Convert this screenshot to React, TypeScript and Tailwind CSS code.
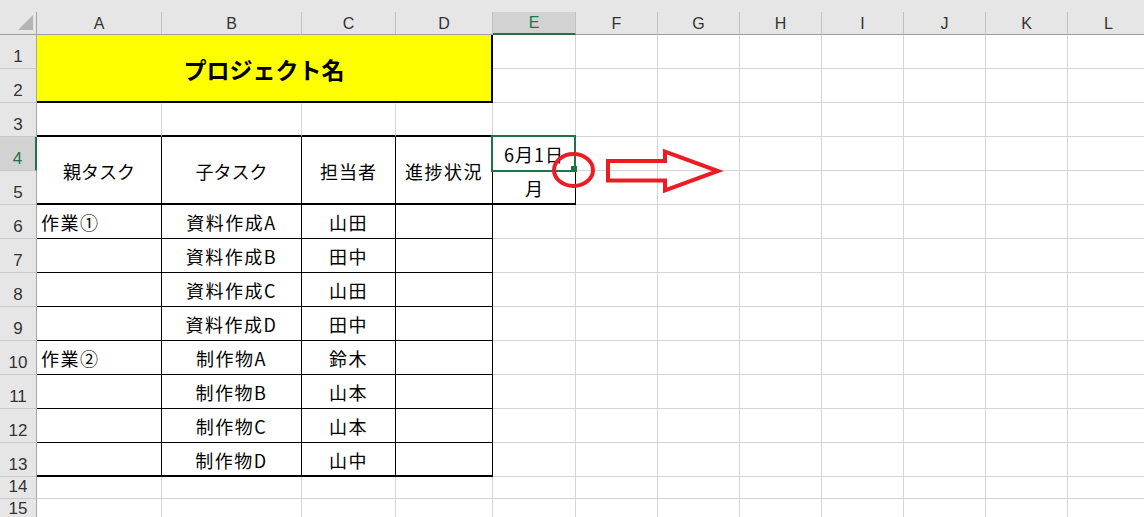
import React from "react";

const FONT = "font-['Noto_Sans_CJK_JP','Noto_Sans_CJK_SC',sans-serif]";
const HEAD_FONT = "font-['Liberation_Sans','Noto_Sans_CJK_JP',sans-serif]";

const COLS = ["A", "B", "C", "D", "E", "F", "G", "H", "I", "J", "K", "L"];

function Blanks({ n }: { n: number }) {
  return (
    <>
      {Array.from({ length: n }).map((_, i) => (
        <div key={i} className="border-r border-b border-[#d4d4d4]" />
      ))}
    </>
  );
}

function RowLabel({ n, active }: { n: number; active?: boolean }) {
  if (active) {
    return (
      <div
        className={`col-start-1 flex items-end justify-center pb-[3px] leading-none text-[17px] bg-[#d2d2d2] text-[#217346] border-r-2 border-r-[#217346] border-b border-b-[#c8c8c8] ${HEAD_FONT}`}
      >
        {n}
      </div>
    );
  }
  return (
    <div
      className={`col-start-1 flex items-end justify-center pb-[3px] leading-none text-[17px] bg-[#e6e6e6] text-[#333] border-r border-r-[#a6a6a6] border-b border-b-[#c8c8c8] ${HEAD_FONT}`}
    >
      {n}
    </div>
  );
}

function ColHead({ l }: { l: string }) {
  if (l === "E") {
    return (
      <div className="flex items-center justify-center pt-[1px] text-[16px] bg-[#d2d2d2] text-[#217346] border-r border-r-[#c0c0c0] border-b-2 border-b-[#217346]">
        {l}
      </div>
    );
  }
  return (
    <div className="flex items-center justify-center pt-[1px] text-[16px] bg-[#e6e6e6] text-[#333] border-r border-r-[#c0c0c0] border-b border-b-[#a0a0a0]">
      {l}
    </div>
  );
}

const tasks = [
  { a: "作業①", b: "資料作成A", c: "山田" },
  { a: "", b: "資料作成B", c: "田中" },
  { a: "", b: "資料作成C", c: "山田" },
  { a: "", b: "資料作成D", c: "田中" },
  { a: "作業②", b: "制作物A", c: "鈴木" },
  { a: "", b: "制作物B", c: "山本" },
  { a: "", b: "制作物C", c: "山本" },
  { a: "", b: "制作物D", c: "山中" },
];

export default function App() {
  return (
    <div className={`relative w-[1144px] h-[517px] overflow-hidden bg-white text-black ${FONT}`}>
      <div className="h-[12px] bg-[#e6e6e6]" />
      <div className="grid grid-cols-[37px_125px_140px_94px_97px_83px_repeat(7,82px)] grid-rows-[23px_repeat(13,34px)_22px_22px]">
        {/* header row */}
        <div className="relative bg-[#e6e6e6] border-r border-r-[#a6a6a6] border-b border-b-[#a0a0a0]">
          <svg className="absolute left-[18px] top-[3px]" width="15" height="15" viewBox="0 0 15 15">
            <polygon points="15,0 15,15 0,15" fill="#b4b4b4" />
          </svg>
        </div>
        <div className={`contents ${HEAD_FONT}`}>
          {COLS.map((l) => (
            <ColHead key={l} l={l} />
          ))}
        </div>

        {/* row 1 */}
        <RowLabel n={1} />
        <div className="col-span-4 row-span-2 flex items-center justify-center pt-[3px] bg-[#ffff00] border-r-2 border-b-2 border-black text-[23px] font-bold">
          プロジェクト名
        </div>
        <Blanks n={8} />

        {/* row 2 */}
        <RowLabel n={2} />
        <Blanks n={8} />

        {/* row 3 */}
        <RowLabel n={3} />
        <div className="border-r border-r-[#d4d4d4] border-b-2 border-b-black" />
        <div className="border-r border-r-[#d4d4d4] border-b-2 border-b-black" />
        <div className="border-r border-r-[#d4d4d4] border-b-2 border-b-black" />
        <div className="border-r border-r-[#d4d4d4] border-b-2 border-b-black" />
        <div className="border-r border-r-[#d4d4d4] border-b-2 border-b-black" />
        <Blanks n={7} />

        {/* rows 4-5 */}
        <RowLabel n={4} active />
        <div className="row-span-2 flex items-center justify-center pt-[2px] text-[18px] border-r border-r-black border-b-2 border-b-black">
          親タスク
        </div>
        <div className="row-span-2 flex items-center justify-center pt-[2px] text-[18px] border-r border-r-black border-b-2 border-b-black">
          子タスク
        </div>
        <div className="row-span-2 flex items-center justify-center pt-[2px] text-[18px] tracking-[1px] border-r border-r-black border-b-2 border-b-black">
          担当者
        </div>
        <div className="row-span-2 flex items-center justify-center pt-[2px] text-[18px] tracking-[1.5px] border-r border-r-black border-b-2 border-b-black">
          進捗状況
        </div>
        <div className="flex items-center justify-center pt-[2px] text-[18px] tracking-[1px] border-r border-b border-black">
          6月1日
        </div>
        <Blanks n={7} />

        <RowLabel n={5} />
        <div className="flex items-center justify-center pt-[2px] text-[18px] border-r border-r-black border-b-2 border-b-black">
          月
        </div>
        <Blanks n={7} />

        {/* rows 6-13 */}
        {tasks.map((t, i) => {
          const last = i === tasks.length - 1;
          const cell = last
            ? "flex items-center pt-[2px] text-[18px] tracking-[1.5px] border-r border-r-black border-b-2 border-b-black"
            : "flex items-center pt-[2px] text-[18px] tracking-[1.5px] border-r border-b border-black";
          return (
            <React.Fragment key={i}>
              <RowLabel n={6 + i} />
              <div className={`${cell} pl-[4px]`}>{t.a}</div>
              <div className={`${cell} justify-center`}>{t.b}</div>
              <div className={`${cell} justify-center`}>{t.c}</div>
              <div className={cell} />
              <Blanks n={8} />
            </React.Fragment>
          );
        })}

        {/* rows 14-15 */}
        <RowLabel n={14} />
        <Blanks n={12} />
        <RowLabel n={15} />
        <Blanks n={12} />
      </div>

      {/* active cell selection on E4 */}
      <div className="absolute left-[491px] top-[135px] w-[85px] h-[37px] border-2 border-[#217346]" />
      <div className="absolute left-[571px] top-[166px] w-[6px] h-[6px] bg-[#217346]" />

      {/* red annotation */}
      <svg className="absolute left-0 top-0 pointer-events-none" width="1144" height="517" viewBox="0 0 1144 517">
        <ellipse cx="573.5" cy="170" rx="19.5" ry="16" fill="none" stroke="#ed1c24" strokeWidth="4" />
        <polygon
          points="608,161 665,161 665,151.5 718,171 665,190.5 665,180.5 608,180.5"
          fill="none"
          stroke="#ed1c24"
          strokeWidth="4"
          strokeLinejoin="miter"
        />
      </svg>
    </div>
  );
}
